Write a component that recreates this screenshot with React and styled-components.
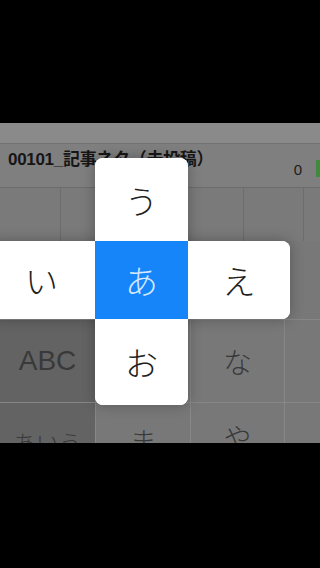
import React from "react";
import styled, { createGlobalStyle } from "styled-components";

const Global = createGlobalStyle`
  html, body { margin: 0; padding: 0; background: #000; }
  body { width: 320px; height: 568px; overflow: hidden; font-family: "Liberation Sans", "Noto Sans CJK JP", sans-serif; }
`;

const Frame = styled.div`
  width: 320px;
  height: 568px;
  background: #000;
  padding-top: 123px;
  box-sizing: border-box;
`;

const Screen = styled.div`
  position: relative;
  width: 320px;
  height: 320px;
  overflow: hidden;
  background: #7a7a7a;
  display: flex;
  flex-direction: column;
`;

const TopBar = styled.div`
  height: 20px;
  flex: none;
  background: #8a8a8a;
  border-bottom: 1px solid #727272;
`;

const TitleRow = styled.div`
  position: relative;
  height: 43px;
  flex: none;
  background: #7f7f7f;
  border-bottom: 1px solid #6c6c6c;
`;

const Title = styled.div`
  position: absolute;
  left: 8px;
  top: 1px;
  font-size: 17px;
  font-weight: 700;
  color: #161616;
  white-space: nowrap;
  letter-spacing: -0.3px;
`;

const Count = styled.div`
  position: absolute;
  right: 18px;
  top: 17px;
  font-size: 15px;
  color: #1c1c1c;
`;

const GreenTab = styled.div`
  position: absolute;
  right: 0;
  top: 16px;
  width: 4px;
  height: 17px;
  background: #3f8a3f;
`;

const Candidates = styled.div`
  height: 53px;
  flex: none;
  display: grid;
  grid-template-columns: 60px 182px 59px 1fr;
  gap: 1px;
  background: #6c6c6c;
`;

const CandCell = styled.div`
  background: #7a7a7a;
`;

const Keys = styled.div`
  flex: 1;
  width: 380px;
  display: grid;
  grid-template-columns: 95px 94px 93px 95px;
  grid-template-rows: 78px 82px 80px;
  gap: 1px;
  background: #878787;
`;

const Key = styled.div`
  background: ${(p) => (p.$dark ? "#636363" : "#787878")};
  display: flex;
  justify-content: center;
  align-items: ${(p) => (p.$low ? "flex-start" : "center")};
  padding-top: ${(p) => (p.$low ? "24px" : "0")};
  box-sizing: border-box;
  color: #393939;
  font-family: ${(p) => (p.$latin ? '"Liberation Sans", sans-serif' : '"Noto Sans CJK JP", sans-serif')};
  font-size: ${(p) => p.$size || 28}px;
  font-weight: 300;
  line-height: 1;
  overflow: hidden;
`;

const Popup = styled.div`
  position: absolute;
  left: 0;
  top: 0;
  width: 0;
  height: 0;
`;

const Tile = styled.div`
  position: absolute;
  left: ${(p) => p.$x}px;
  top: ${(p) => p.$y}px;
  width: ${(p) => p.$w}px;
  height: ${(p) => p.$h}px;
  background: ${(p) => (p.$active ? "#1685f9" : "#ffffff")};
  color: ${(p) => (p.$active ? "#d6e9ff" : "#222222")};
  border-radius: ${(p) => p.$r || "0"};
  box-shadow: ${(p) => (p.$shadow ? "0 0 14px rgba(0,0,0,0.28)" : "none")};
  display: flex;
  justify-content: center;
  align-items: center;
  font-family: "Noto Sans CJK JP", sans-serif;
  font-size: 33px;
  font-weight: 300;
  line-height: 1;
`;

export default function App() {
  return (
    <>
      <Global />
      <Frame>
        <Screen>
          <TopBar />
          <TitleRow>
            <Title>00101_記事ネタ（未投稿）</Title>
            <Count>0</Count>
            <GreenTab />
          </TitleRow>
          <Candidates>
            <CandCell />
            <CandCell />
            <CandCell />
            <CandCell />
          </Candidates>
          <Keys>
            <Key $dark />
            <Key />
            <Key />
            <Key />
            <Key $dark $latin $size={28}>ABC</Key>
            <Key>た</Key>
            <Key $size={29}>な</Key>
            <Key $size={29}>は</Key>
            <Key $dark $low $size={23} style={{ paddingTop: 28 }}>あいう</Key>
            <Key $low>ま</Key>
            <Key $low style={{ paddingTop: 20 }}>や</Key>
            <Key $low>ら</Key>
          </Keys>
          <Popup>
            <Tile $x={95} $y={35} $w={93} $h={247} $r="8px" $shadow />
            <Tile $x={-12} $y={118} $w={302} $h={78} $r="8px" $shadow />
            <Tile $x={95} $y={35} $w={93} $h={84} $r="8px 8px 0 0">う</Tile>
            <Tile $x={-12} $y={118} $w={107} $h={78} $r="8px 0 0 8px">い</Tile>
            <Tile $x={95} $y={118} $w={93} $h={78} $active>あ</Tile>
            <Tile $x={188} $y={118} $w={102} $h={78} $r="0 8px 8px 0">え</Tile>
            <Tile $x={95} $y={196} $w={93} $h={86} $r="0 0 8px 8px">お</Tile>
          </Popup>
        </Screen>
      </Frame>
    </>
  );
}
